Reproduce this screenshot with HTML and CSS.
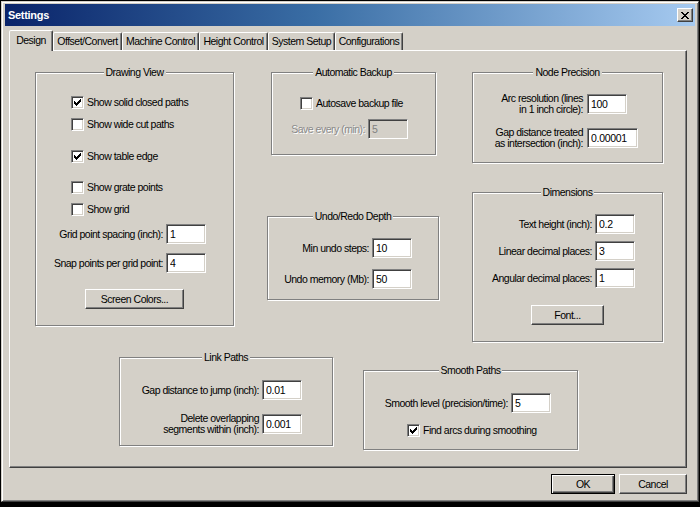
FILE: index.html
```html
<!DOCTYPE html>
<html lang="en">
<head>
<meta charset="utf-8">
<title>Settings</title>
<link rel="stylesheet" href="styles.css">
</head>
<body>
<div class="window">
  <div class="titlebar">
    <span class="title">Settings</span>
    <span class="close" aria-label="Close">
      <svg width="8" height="7" viewBox="0 0 8 7" shape-rendering="crispEdges">
        <rect x="0" y="0" width="2" height="1"/><rect x="6" y="0" width="2" height="1"/>
        <rect x="1" y="1" width="2" height="1"/><rect x="5" y="1" width="2" height="1"/>
        <rect x="2" y="2" width="4" height="1"/>
        <rect x="3" y="3" width="2" height="1"/>
        <rect x="2" y="4" width="4" height="1"/>
        <rect x="1" y="5" width="2" height="1"/><rect x="5" y="5" width="2" height="1"/>
        <rect x="0" y="6" width="2" height="1"/><rect x="6" y="6" width="2" height="1"/>
      </svg>
    </span>
  </div>

  <div class="tabs">
    <div class="tab active t-design">Design</div>
    <div class="tab t-offset">Offset/Convert</div>
    <div class="tab t-machine">Machine Control</div>
    <div class="tab t-height">Height Control</div>
    <div class="tab t-system">System Setup</div>
    <div class="tab t-config">Configurations</div>
  </div>

  <div class="panel">
    <div class="top">
      <div class="col col1">
        <div class="group g-draw">
          <div class="gt">Drawing View</div>
          <div class="cbrow d1"><span class="cb"><svg class="chk" width="7" height="7" viewBox="0 0 7 7" shape-rendering="crispEdges"><rect x="0" y="2" width="1" height="3"/><rect x="1" y="3" width="1" height="3"/><rect x="2" y="4" width="1" height="3"/><rect x="3" y="3" width="1" height="3"/><rect x="4" y="2" width="1" height="3"/><rect x="5" y="1" width="1" height="3"/><rect x="6" y="0" width="1" height="3"/></svg></span><span>Show solid closed paths</span></div>
          <div class="cbrow d2"><span class="cb"></span><span>Show wide cut paths</span></div>
          <div class="cbrow d3"><span class="cb"><svg class="chk" width="7" height="7" viewBox="0 0 7 7" shape-rendering="crispEdges"><rect x="0" y="2" width="1" height="3"/><rect x="1" y="3" width="1" height="3"/><rect x="2" y="4" width="1" height="3"/><rect x="3" y="3" width="1" height="3"/><rect x="4" y="2" width="1" height="3"/><rect x="5" y="1" width="1" height="3"/><rect x="6" y="0" width="1" height="3"/></svg></span><span>Show table edge</span></div>
          <div class="cbrow d4"><span class="cb"></span><span>Show grate points</span></div>
          <div class="cbrow d5"><span class="cb"></span><span>Show grid</span></div>
          <div class="frow d6"><label>Grid point spacing (inch):</label><input class="inp" type="text" value="1"></div>
          <div class="frow d7"><label>Snap points per grid point:</label><input class="inp" type="text" value="4"></div>
          <button class="btn b-colors">Screen Colors...</button>
        </div>
      </div>

      <div class="col col2">
        <div class="group g-backup">
          <div class="gt">Automatic Backup</div>
          <div class="cbrow a1"><span class="cb"></span><span>Autosave backup file</span></div>
          <div class="frow a2"><label class="dis">Save every (min):</label><input class="inp" type="text" value="5" disabled></div>
        </div>
        <div class="group g-undo">
          <div class="gt">Undo/Redo Depth</div>
          <div class="frow u1"><label>Min undo steps:</label><input class="inp" type="text" value="10"></div>
          <div class="frow u2"><label>Undo memory (Mb):</label><input class="inp" type="text" value="50"></div>
        </div>
      </div>

      <div class="col col3">
        <div class="group g-node">
          <div class="gt">Node Precision</div>
          <div class="frow n1"><label>Arc resolution (lines<br>in 1 inch circle):</label><input class="inp" type="text" value="100"></div>
          <div class="frow n2"><label>Gap distance treated<br>as intersection (inch):</label><input class="inp wide" type="text" value="0.00001"></div>
        </div>
        <div class="group g-dims">
          <div class="gt">Dimensions</div>
          <div class="frow m1"><label>Text height (inch):</label><input class="inp" type="text" value="0.2"></div>
          <div class="frow m2"><label>Linear decimal places:</label><input class="inp" type="text" value="3"></div>
          <div class="frow m3"><label>Angular decimal places:</label><input class="inp" type="text" value="1"></div>
          <button class="btn b-font">Font...</button>
        </div>
      </div>
    </div>

    <div class="bottom">
      <div class="group g-link">
        <div class="gt">Link Paths</div>
        <div class="frow l1"><label>Gap distance to jump (inch):</label><input class="inp" type="text" value="0.01"></div>
        <div class="frow l2"><label>Delete overlapping<br>segments within (inch):</label><input class="inp" type="text" value="0.001"></div>
      </div>
      <div class="group g-smooth">
        <div class="gt">Smooth Paths</div>
        <div class="frow s1"><label>Smooth level (precision/time):</label><input class="inp" type="text" value="5"></div>
        <div class="cbrow s2"><span class="cb"><svg class="chk" width="7" height="7" viewBox="0 0 7 7" shape-rendering="crispEdges"><rect x="0" y="2" width="1" height="3"/><rect x="1" y="3" width="1" height="3"/><rect x="2" y="4" width="1" height="3"/><rect x="3" y="3" width="1" height="3"/><rect x="4" y="2" width="1" height="3"/><rect x="5" y="1" width="1" height="3"/><rect x="6" y="0" width="1" height="3"/></svg></span><span>Find arcs during smoothing</span></div>
      </div>
    </div>
  </div>

  <div class="actions">
    <button class="btn default b-ok">OK</button>
    <button class="btn b-cancel">Cancel</button>
  </div>
</div>
</body>
</html>
```

FILE: styles.css
```css
* { box-sizing: border-box; }
html, body { margin: 0; padding: 0; }
body {
  background: #000;
  width: 700px;
  height: 507px;
  overflow: hidden;
  font-family: "Liberation Sans", Arial, sans-serif;
  font-size: 10.5px;
  letter-spacing: -0.5px;
  line-height: 13px;
  color: #000;
}

.window {
  margin: 1px 0 0 1px;
  width: 698px;
  height: 501px;
  background: #d4d0c8;
  border: 1px solid;
  border-color: #d4d0c8 #404040 #404040 #d4d0c8;
  box-shadow: inset 1px 1px #fff, inset -1px -1px #808080;
  padding: 2px 3px 0 3px;
  display: flex;
  flex-direction: column;
}

.titlebar {
  height: 22px;
  flex: none;
  background: linear-gradient(to right, #0a246a 0%, #3a6ea5 45%, #a6caf0 100%);
  display: flex;
  align-items: center;
  justify-content: space-between;
  padding: 0 2px 0 3px;
}
.title {
  color: #fff;
  font-weight: bold;
  font-size: 11px;
  letter-spacing: -0.3px;
}
.close {
  width: 16px;
  height: 14px;
  background: #d4d0c8;
  border: 1px solid;
  border-color: #fff #404040 #404040 #fff;
  box-shadow: inset -1px -1px #808080;
  display: flex;
  align-items: center;
  justify-content: center;
}
.close svg { fill: #000; display: block; }

/* tabs */
.tabs {
  display: flex;
  align-items: flex-end;
  height: 20px;
  margin: 4px 0 0 4px;
  flex: none;
}
.tab {
  height: 18px;
  background: #d4d0c8;
  border: 1px solid;
  border-bottom: none;
  border-color: #fff #404040 transparent #fff;
  box-shadow: inset -1px 0 #808080;
  border-radius: 2px 2px 0 0;
  display: flex;
  align-items: center;
  justify-content: center;
  white-space: nowrap;
}
.tab.active {
  height: 21px;
  margin-bottom: -1px;
  position: relative;
  z-index: 1;
  padding-bottom: 2px;
}
.t-design { width: 44px; }
.t-offset { width: 69px; }
.t-machine { width: 77px; }
.t-height { width: 69px; }
.t-system { width: 67px; }
.t-config { width: 68px; }

/* panel */
.panel {
  margin-left: 4px;
  width: 678px;
  height: 418px;
  flex: none;
  border: 1px solid;
  border-color: #fff #404040 #404040 #fff;
  box-shadow: inset -1px -1px #808080;
  padding-top: 21px;
}
.top {
  display: flex;
  align-items: flex-start;
}
.col {
  display: flex;
  flex-direction: column;
  align-items: flex-start;
}
.col1 { margin-left: 25px; }
.col2 { margin-left: 33px; width: 172px; }
.col3 { margin-left: 33px; width: 191px; }

.bottom {
  display: flex;
  align-items: flex-start;
  margin-top: 15px;
}

/* group boxes */
.group {
  border: 1px solid #808080;
  box-shadow: inset 1px 1px #fff, 1px 1px #fff;
  display: flex;
  flex-direction: column;
  align-items: stretch;
}
.gt {
  align-self: center;
  height: 13px;
  line-height: 13px;
  margin: -7px 0 -6px;
  padding: 0 2px;
  background: #d4d0c8;
  white-space: nowrap;
}

.g-draw { width: 199px; height: 254px; }
.g-backup { width: 165px; height: 83px; margin-left: 4px; }
.g-undo { width: 172px; height: 84px; margin-top: 61px; }
.g-node { width: 191px; height: 91px; }
.g-dims { width: 191px; height: 150px; margin-top: 29px; }
.g-link { width: 214px; height: 89px; margin-left: 109px; }
.g-smooth { width: 215px; height: 80px; margin-left: 30px; margin-top: 13px; }

/* checkbox rows */
.cbrow {
  display: flex;
  align-items: center;
  height: 13px;
  white-space: nowrap;
}
.cb {
  width: 13px;
  height: 13px;
  flex: none;
  background: #fff;
  border: 1px solid;
  border-color: #808080 #fff #fff #808080;
  box-shadow: inset 1px 1px #404040, inset -1px -1px #d4d0c8;
  margin-right: 3px;
  padding: 2px 0 0 2px;
}
.chk { display: block; fill: #000; }

/* label + field rows */
.frow {
  display: flex;
  align-items: center;
  justify-content: flex-end;
  white-space: nowrap;
}
.frow label {
  margin-right: 3px;
  text-align: right;
  line-height: 11px;
}
.inp {
  width: 40px;
  height: 20px;
  flex: none;
  margin: 0;
  padding: 0 0 0 3px;
  border: 1px solid;
  border-color: #808080 #fff #fff #808080;
  box-shadow: inset 1px 1px #404040, inset -1px -1px #d4d0c8;
  background: #fff;
  font-family: inherit;
  font-size: 10.5px;
  letter-spacing: -0.3px;
  color: #000;
  outline: none;
}
.inp.wide { width: 51px; }
.inp:disabled { background: #d4d0c8; color: #808080; }
.dis { color: #8a8a8a; text-shadow: 1px 1px 0 #fff; }

/* buttons */
.btn {
  height: 20px;
  margin: 0;
  padding: 0;
  background: #d4d0c8;
  border: 1px solid;
  border-color: #fff #404040 #404040 #fff;
  box-shadow: inset -1px -1px #808080;
  font-family: inherit;
  font-size: 10.5px;
  letter-spacing: -0.5px;
  color: #000;
  align-self: center;
}
.btn.default {
  border-color: #000;
  box-shadow: inset 1px 1px #fff, inset -1px -1px #404040, inset -2px -2px #808080;
}

/* Drawing View placement */
.d1 { margin: 23px 0 0 35px; }
.d2 { margin: 9px 0 0 35px; }
.d3 { margin: 19px 0 0 35px; }
.d4 { margin: 18px 0 0 35px; }
.d5 { margin: 9px 0 0 35px; }
.d6 { margin-top: 8px; padding-right: 27px; }
.d7 { margin-top: 9px; padding-right: 27px; }
.b-colors { width: 99px; margin-top: 16px; }

/* Backup */
.a1 { margin: 24px 0 0 28px; }
.a2 { margin-top: 9px; padding-right: 27px; }

/* Undo */
.u1 { margin-top: 21px; padding-right: 26px; }
.u2 { margin-top: 11px; padding-right: 26px; }

/* Node precision: labels in a fixed column */
.g-node .frow { justify-content: flex-start; }
.g-node .frow label { width: 110px; margin-right: 4px; }
.n1 { margin-top: 20px; }
.n2 { margin-top: 12px; }

/* Dimensions */
.m1 { margin-top: 21px; padding-right: 27px; }
.m2 { margin-top: 7px; padding-right: 27px; }
.m3 { margin-top: 7px; padding-right: 27px; }
.b-font { width: 73px; margin-top: 17px; }

/* Link paths */
.l1 { margin-top: 22px; padding-right: 30px; }
.l2 { margin-top: 13px; padding-right: 30px; }

/* Smooth paths */
.s1 { margin-top: 22px; padding-right: 26px; }
.s2 { margin: 11px 0 0 43px; }

/* dialog buttons */
.actions {
  display: flex;
  justify-content: flex-end;
  gap: 4px;
  width: 678px;
  margin: 6px 0 0 4px;
}
.b-ok { width: 64px; }
.b-cancel { width: 68px; }
```
